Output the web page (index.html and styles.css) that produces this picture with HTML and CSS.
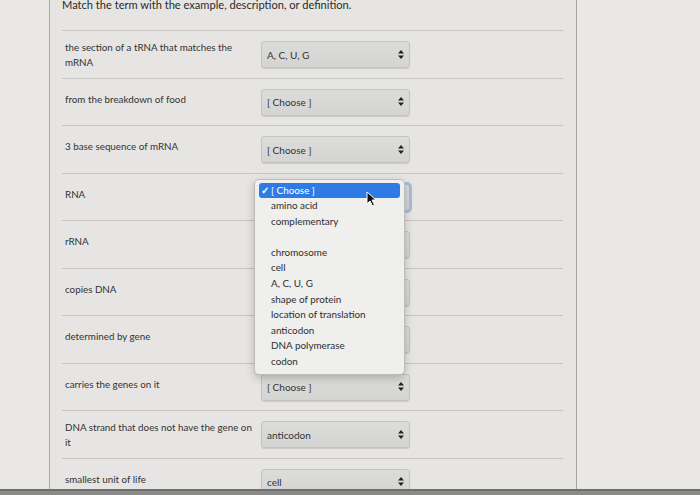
FILE: index.html
```html
<!DOCTYPE html>
<html lang="en">
<head>
    <meta charset="UTF-8">
    <meta name="viewport" content="width=device-width, initial-scale=1.0">
    <title>Matching Question</title>
    <link rel="stylesheet" href="styles.css">
</head>
<body>
    <div class="screen">
        <div class="sidebar"></div>
        <div class="quiz">
            <p class="prompt">Match the term with the example, description, or definition.</p>
            <div class="answers">
                <div class="row">
                    <div class="term long">the section of a tRNA that matches the mRNA</div>
                    <div class="select"><span>A, C, U, G</span><svg class="arrows" width="6" height="9" viewBox="0 0 6 9"><path d="M3 0 L6 3.5 H0 Z M3 9 L0 5.5 H6 Z" fill="#222"/></svg></div>
                </div>
                <div class="row">
                    <div class="term">from the breakdown of food</div>
                    <div class="select"><span>[ Choose ]</span><svg class="arrows" width="6" height="9" viewBox="0 0 6 9"><path d="M3 0 L6 3.5 H0 Z M3 9 L0 5.5 H6 Z" fill="#222"/></svg></div>
                </div>
                <div class="row">
                    <div class="term">3 base sequence of mRNA</div>
                    <div class="select"><span>[ Choose ]</span><svg class="arrows" width="6" height="9" viewBox="0 0 6 9"><path d="M3 0 L6 3.5 H0 Z M3 9 L0 5.5 H6 Z" fill="#222"/></svg></div>
                </div>
                <div class="row">
                    <div class="term">RNA</div>
                    <div class="select focused"><span>[ Choose ]</span><svg class="arrows" width="6" height="9" viewBox="0 0 6 9"><path d="M3 0 L6 3.5 H0 Z M3 9 L0 5.5 H6 Z" fill="#222"/></svg>
                        <!-- open dropdown list -->
                        <ul class="menu">
                            <li class="selected"><span class="check">&#10003;</span>[ Choose ]</li>
                            <li>amino acid</li>
                            <li>complementary</li>
                            <li>&nbsp;</li>
                            <li>chromosome</li>
                            <li>cell</li>
                            <li>A, C, U, G</li>
                            <li>shape of protein</li>
                            <li>location of translation</li>
                            <li>anticodon</li>
                            <li>DNA polymerase</li>
                            <li>codon</li>
                        </ul>
                        <svg class="cursor" width="11" height="16" viewBox="0 0 11 16"><path d="M1 1 L1 13 L4 10 L6.5 15 L8.5 14 L6 9 L10 9 Z" fill="#111" stroke="#fff" stroke-width="1"/></svg>
                    </div>
                </div>
                <div class="row">
                    <div class="term">rRNA</div>
                    <div class="select"><span>[ Choose ]</span><svg class="arrows" width="6" height="9" viewBox="0 0 6 9"><path d="M3 0 L6 3.5 H0 Z M3 9 L0 5.5 H6 Z" fill="#222"/></svg></div>
                </div>
                <div class="row">
                    <div class="term">copies DNA</div>
                    <div class="select"><span>[ Choose ]</span><svg class="arrows" width="6" height="9" viewBox="0 0 6 9"><path d="M3 0 L6 3.5 H0 Z M3 9 L0 5.5 H6 Z" fill="#222"/></svg></div>
                </div>
                <div class="row">
                    <div class="term">determined by gene</div>
                    <div class="select"><span>[ Choose ]</span><svg class="arrows" width="6" height="9" viewBox="0 0 6 9"><path d="M3 0 L6 3.5 H0 Z M3 9 L0 5.5 H6 Z" fill="#222"/></svg></div>
                </div>
                <div class="row">
                    <div class="term">carries the genes on it</div>
                    <div class="select"><span>[ Choose ]</span><svg class="arrows" width="6" height="9" viewBox="0 0 6 9"><path d="M3 0 L6 3.5 H0 Z M3 9 L0 5.5 H6 Z" fill="#222"/></svg></div>
                </div>
                <div class="row">
                    <div class="term long">DNA strand that does not have the gene on it</div>
                    <div class="select"><span>anticodon</span><svg class="arrows" width="6" height="9" viewBox="0 0 6 9"><path d="M3 0 L6 3.5 H0 Z M3 9 L0 5.5 H6 Z" fill="#222"/></svg></div>
                </div>
                <div class="row">
                    <div class="term">smallest unit of life</div>
                    <div class="select"><span>cell</span><svg class="arrows" width="6" height="9" viewBox="0 0 6 9"><path d="M3 0 L6 3.5 H0 Z M3 9 L0 5.5 H6 Z" fill="#222"/></svg></div>
                </div>
            </div>
        </div>
        <div class="aside"></div>
    </div>
</body>
</html>
```

FILE: styles.css
```css
body {
    margin: 0;
    background-color: #8a8a88;
    font-family: Lato, "Open Sans", sans-serif;
    color: #3a3a3a;
    overflow: hidden;
}
.screen {
    display: flex;
    height: 489px;
    background-color: #e6e5e3;
    border-bottom: 2px solid #6e6e6c;
    overflow: hidden;
}
.sidebar {
    width: 49px;
    border-right: 1px solid #a9a9a7;
    background-color: #e8e7e5;
}
.quiz {
    width: 501px;
    padding: 0 13px 0 12px;
    border-right: 1px solid #a4a4a2;
}
.aside {
    flex: 1;
    background-color: #e9e8e6;
}
.prompt {
    margin: -3px 0 0 0;
    font-size: 11.1px;
    line-height: 16px;
    color: #2a2a2a;
    height: 17px;
    padding-bottom: 16px;
}
.row {
    display: flex;
    align-items: flex-start;
    border-top: 1px solid #c6c6c4;
    padding: 10px 0 9.5px 3px;
}
.term {
    width: 192px;
    margin-right: 4px;
    padding-top: 3px;
    font-size: 9.8px;
    line-height: 14.5px;
    color: #333;
}
.term.long {
    padding-top: 0;
    margin-top: -1px;
    margin-bottom: -2px;
}
.select {
    position: relative;
    width: 137px;
    height: 25px;
    border: 1px solid #c3c3c1;
    border-radius: 3px;
    background: linear-gradient(#dcdcda, #d4d4d2);
    box-shadow: 0 1px 1px rgba(0, 0, 0, 0.12);
    display: flex;
    align-items: center;
    justify-content: space-between;
    padding: 0 5px 0 5px;
    box-sizing: content-box;
    font-size: 10px;
    color: #333;
}
.arrows {
    margin-top: -1px;
}
.focused {
    outline: 3px solid #a8bbdc;
    outline-offset: -1px;
}
.menu {
    position: absolute;
    left: -8px;
    top: -6px;
    width: 141px;
    margin: 0;
    padding: 3px 4px 4px 4px;
    list-style: none;
    background-color: #efefee;
    border: 1px solid #bdbdbc;
    border-radius: 5px;
    box-shadow: 0 3px 8px rgba(0, 0, 0, 0.22);
    z-index: 2;
}
.menu li {
    height: 15.6px;
    line-height: 15.6px;
    padding-left: 12px;
    font-size: 9.9px;
    color: #2e2e2e;
    white-space: nowrap;
}
.menu li.selected {
    background-color: #2f7be6;
    color: #fff;
    border-radius: 3px;
    padding-left: 2px;
}
.check {
    display: inline-block;
    width: 10px;
    font-size: 10px;
    font-weight: bold;
}
.cursor {
    position: absolute;
    left: 104px;
    top: 6px;
    z-index: 3;
}
```
